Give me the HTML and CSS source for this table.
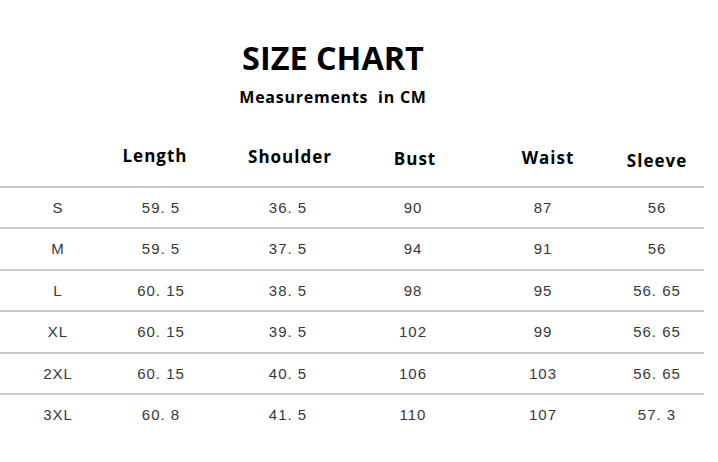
FILE: index.html
```html
<!DOCTYPE html>
<html lang="en">
<head>
<meta charset="utf-8">
<title>Size Chart</title>
<link rel="stylesheet" href="styles.css">
</head>
<body>
<div class="page">
  <header class="heading">
    <h1 class="title">SIZE CHART</h1>
    <p class="subtitle">Measurements&nbsp; in CM</p>
  </header>
  <div class="chart">
    <div class="row head">
      <span class="cell"></span>
      <span class="cell h-length">Length</span>
      <span class="cell h-shoulder">Shoulder</span>
      <span class="cell h-bust">Bust</span>
      <span class="cell h-waist">Waist</span>
      <span class="cell h-sleeve">Sleeve</span>
    </div>
    <div class="row data">
      <span class="cell">S</span><span class="cell">59. 5</span><span class="cell">36. 5</span><span class="cell">90</span><span class="cell">87</span><span class="cell">56</span>
    </div>
    <div class="row data">
      <span class="cell">M</span><span class="cell">59. 5</span><span class="cell">37. 5</span><span class="cell">94</span><span class="cell">91</span><span class="cell">56</span>
    </div>
    <div class="row data">
      <span class="cell">L</span><span class="cell">60. 15</span><span class="cell">38. 5</span><span class="cell">98</span><span class="cell">95</span><span class="cell">56. 65</span>
    </div>
    <div class="row data">
      <span class="cell">XL</span><span class="cell">60. 15</span><span class="cell">39. 5</span><span class="cell">102</span><span class="cell">99</span><span class="cell">56. 65</span>
    </div>
    <div class="row data">
      <span class="cell">2XL</span><span class="cell">60. 15</span><span class="cell">40. 5</span><span class="cell">106</span><span class="cell">103</span><span class="cell">56. 65</span>
    </div>
    <div class="row data">
      <span class="cell">3XL</span><span class="cell">60. 8</span><span class="cell">41. 5</span><span class="cell">110</span><span class="cell">107</span><span class="cell">57. 3</span>
    </div>
  </div>
</div>
</body>
</html>
```

FILE: styles.css
```css
html, body {
  margin: 0;
  padding: 0;
  background: #ffffff;
}

.page {
  width: 718px;
  height: 462px;
  overflow: hidden;
  padding-top: 39px;
  box-sizing: border-box;
}

.heading {
  width: 666px;
  text-align: center;
  font-family: "Open Sans", "Liberation Sans", sans-serif;
  color: #000;
}

.title {
  margin: 0;
  font-size: 32.4px;
  line-height: 36px;
  font-weight: 700;
}

.subtitle {
  margin: 12px 0 0;
  font-size: 16px;
  line-height: 20px;
  letter-spacing: 0.75px;
  font-weight: 700;
}

.chart {
  width: 704px;
  margin-top: 34px;
}

.row {
  display: grid;
  grid-template-columns: 116px 90px 164px 86px 174px 54px;
  justify-items: center;
}

.head {
  height: 45px;
  box-sizing: border-box;
  padding-top: 5px;
  font-family: "Open Sans", "Liberation Sans", sans-serif;
  font-weight: 700;
  font-size: 17px;
  line-height: 20px;
  letter-spacing: 1px;
  color: #000;
}

.h-length { padding-right: 12px; }
.h-shoulder { padding-left: 4px; margin-top: 1px; }
.h-bust { padding-left: 4px; margin-top: 3px; }
.h-waist { padding-left: 10px; margin-top: 2px; }
.h-sleeve { margin-top: 5px; }

.data {
  height: 41.4px;
  box-sizing: border-box;
  border-top: 2px solid #c9c9c9;
  font-family: "Liberation Sans", Arial, sans-serif;
  font-size: 15px;
  line-height: 39px;
  letter-spacing: 1px;
  color: #383838;
}

.cell {
  white-space: nowrap;
}
```
